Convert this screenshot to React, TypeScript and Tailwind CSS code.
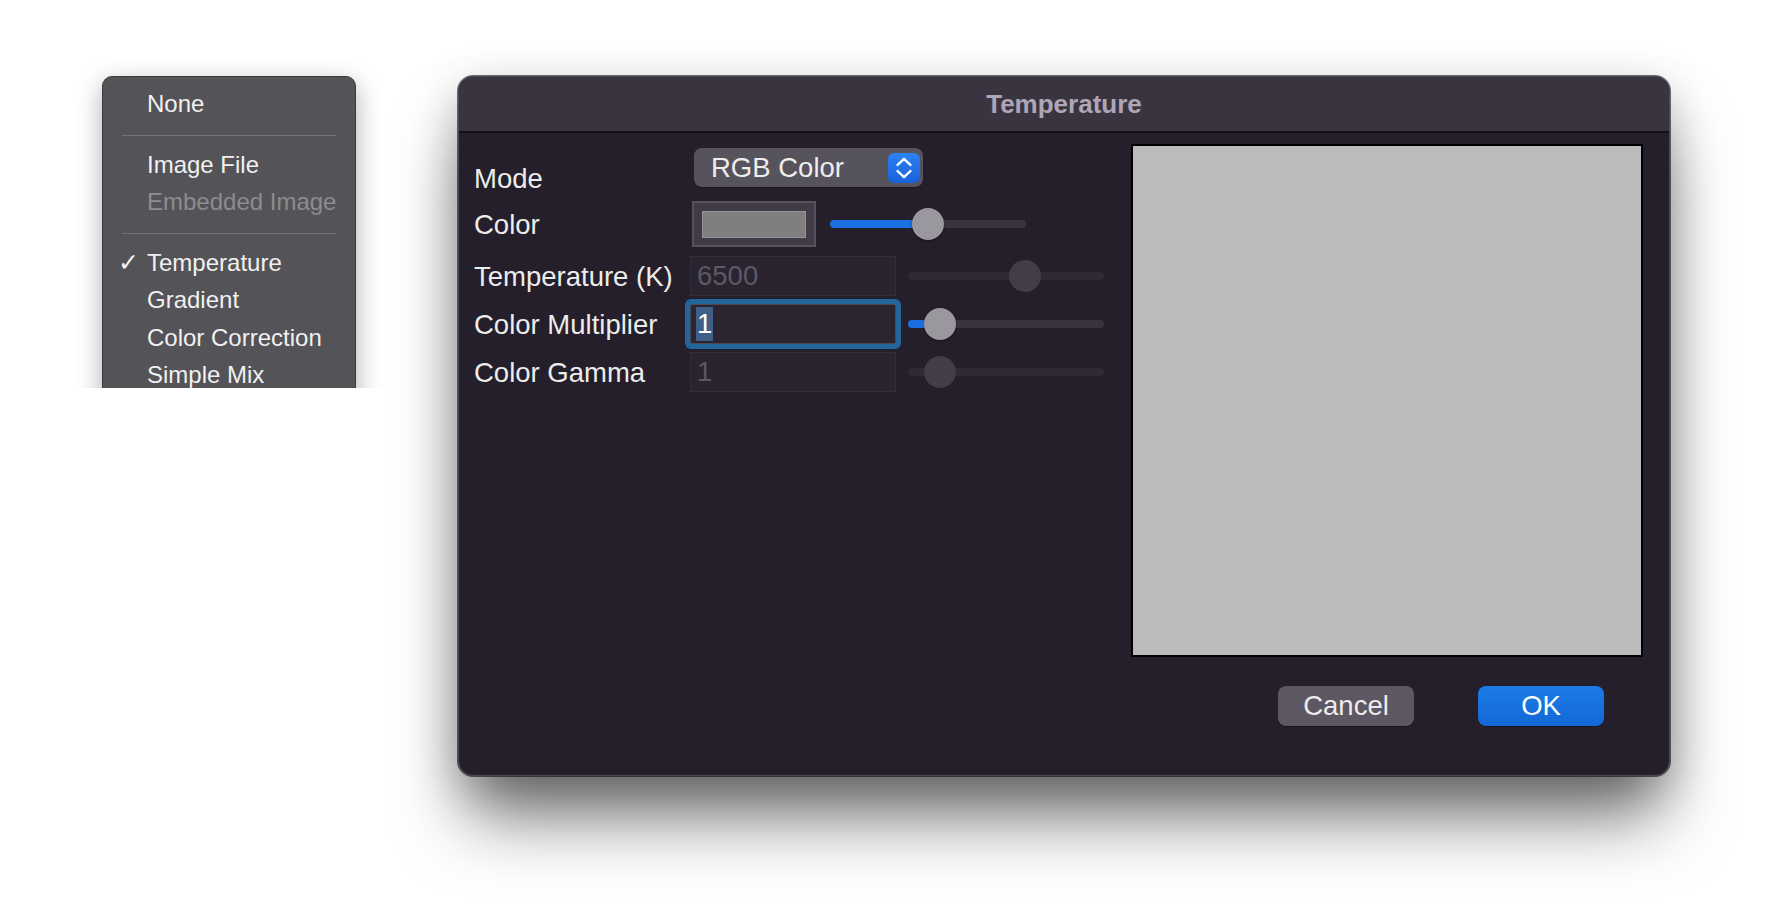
import React from "react";

type SliderProps = { fill: number; knob: number; enabled: boolean };

function Slider({ fill, knob, enabled }: SliderProps) {
  return (
    <div className="relative h-[32px] w-[196px] shrink-0">
      <div
        className={
          enabled
            ? "absolute left-0 right-0 top-[12px] h-[8px] rounded-full bg-[#38333e]"
            : "absolute left-0 right-0 top-[12px] h-[8px] rounded-full bg-[#2f2a35]"
        }
      />
      {fill > 0 && (
        <div
          className="absolute left-0 top-[12px] h-[8px] rounded-full bg-[#1b6fe2]"
          style={{ width: fill }}
        />
      )}
      <div
        className={
          enabled
            ? "absolute top-0 h-[32px] w-[32px] rounded-full bg-[#9b979f] shadow-[0_1px_2px_rgba(0,0,0,0.4)]"
            : "absolute top-0 h-[32px] w-[32px] rounded-full bg-[#423d48]"
        }
        style={{ left: knob - 16 }}
      />
    </div>
  );
}

function MenuItem({ label, checked, disabled }: { label: string; checked?: boolean; disabled?: boolean }) {
  return (
    <div className="flex h-[37.5px] items-center pl-[15px] leading-[37.5px]">
      <span className="w-[29px] text-[25px] text-[#f2f2f2]">{checked ? "✓" : ""}</span>
      <span className={disabled ? "text-[#8d8c8f]" : "text-[#f0f0f0]"}>{label}</span>
    </div>
  );
}

function Separator() {
  return (
    <div className="pt-[12px] pb-[10px]">
      <div className="mx-[19px] h-px bg-[#737275]" />
    </div>
  );
}

function Label({ children }: { children: React.ReactNode }) {
  return <div className="w-[216px] shrink-0 leading-[27px] text-[#ececec]">{children}</div>;
}

export default function App() {
  return (
    <div className="flex h-[924px] w-[1782px] items-start overflow-hidden bg-white font-['Liberation_Sans',Arial,sans-serif]">
      {/* Popup menu (cropped) */}
      <div className="h-[388px] w-[400px] shrink-0 overflow-hidden pl-[102px] pt-[76px]">
        <div className="h-[420px] w-[254px] rounded-[10px] border border-[#3a393c] bg-[#545357] pt-[8px] text-[24px] shadow-[0_8px_26px_rgba(0,0,0,0.32)]">
          <MenuItem label="None" />
          <Separator />
          <MenuItem label="Image File" />
          <MenuItem label="Embedded Image" disabled />
          <Separator />
          <MenuItem label="Temperature" checked />
          <MenuItem label="Gradient" />
          <MenuItem label="Color Correction" />
          <MenuItem label="Simple Mix" />
        </div>
      </div>

      {/* Dialog */}
      <div className="ml-[58px] mt-[76px] flex h-[700px] w-[1212px] shrink-0 flex-col overflow-hidden rounded-[15px] border border-[#4b4851] bg-[#241f2a] text-[27.5px] shadow-[0_0_0_1px_rgba(0,0,0,0.55),0_50px_70px_-10px_rgba(0,0,0,0.55),0_12px_45px_rgba(0,0,0,0.22)]">
        {/* Title bar */}
        <div className="flex h-[56px] shrink-0 items-center justify-center border-b-2 border-[#141218] bg-[#3a3441]">
          <span className="text-[26px] font-bold text-[#aea6b7]">Temperature</span>
        </div>

        {/* Body */}
        <div className="flex pl-[15px] pr-[26px] pt-[11px]">
          <div className="flex flex-1 flex-col">
            {/* Mode */}
            <div className="mt-[4px] flex h-[39px] items-start">
              <div className="mt-[17px]">
                <Label>Mode</Label>
              </div>
              <div className="ml-[4px] flex h-[39px] w-[229px] items-center justify-between rounded-[8px] bg-[#57535c] pl-[17px] pr-[3px] text-[#ededed] shadow-[0_1px_1px_rgba(0,0,0,0.3)]">
                <span>RGB Color</span>
                <div className="flex h-[30px] w-[32px] items-center justify-center rounded-[6px] bg-[linear-gradient(#2d82f2,#1762d9)]">
                  <svg width="18" height="24" viewBox="0 0 18 24" fill="none">
                    <path d="M2.5 9 L9 2.8 L15.5 9" stroke="white" strokeWidth="2.4" strokeLinecap="round" strokeLinejoin="round" />
                    <path d="M2.5 15 L9 21.2 L15.5 15" stroke="white" strokeWidth="2.4" strokeLinecap="round" strokeLinejoin="round" />
                  </svg>
                </div>
              </div>
            </div>

            {/* Color */}
            <div className="mt-[14px] flex h-[46px] items-center">
              <Label>Color</Label>
              <div className="ml-[2px] flex h-[46px] w-[124px] shrink-0 items-center justify-center border-2 border-[#57535d] bg-[#403b46]">
                <div className="h-[27px] w-[104px] border border-[#939393] bg-[#7f7f7f]" />
              </div>
              <div className="ml-[14px]">
                <Slider fill={98} knob={98} enabled />
              </div>
            </div>

            {/* Temperature (K) */}
            <div className="mt-[5px] flex h-[48px] items-center">
              <Label>Temperature (K)</Label>
              <div className="flex h-[40px] w-[206px] shrink-0 items-center border border-[#332e39] bg-[#29242f] px-[6px] text-[#5d5865]">
                6500
              </div>
              <div className="ml-[12px]">
                <Slider fill={0} knob={117} enabled={false} />
              </div>
            </div>

            {/* Color Multiplier */}
            <div className="flex h-[48px] items-center">
              <Label>Color Multiplier</Label>
              <div className="flex h-[40px] w-[206px] shrink-0 items-center rounded-[2px] border border-[#4d4856] bg-[#2a2530] px-[5px] text-white shadow-[0_0_0_5px_#22649c]">
                <span className="inline-block h-[34px] bg-[#3d5f88] px-px leading-[34px]">1</span>
              </div>
              <div className="ml-[12px]">
                <Slider fill={32} knob={32} enabled />
              </div>
            </div>

            {/* Color Gamma */}
            <div className="flex h-[48px] items-center">
              <Label>Color Gamma</Label>
              <div className="flex h-[40px] w-[206px] shrink-0 items-center border border-[#332e39] bg-[#29242f] px-[6px] text-[#5d5865]">
                1
              </div>
              <div className="ml-[12px]">
                <Slider fill={0} knob={32} enabled={false} />
              </div>
            </div>
          </div>

          {/* Preview */}
          <div className="h-[513px] w-[512px] shrink-0 border-2 border-black bg-[#bbbbbb]" />
        </div>

        {/* Buttons */}
        <div className="mt-[29px] flex justify-end gap-[64px] pr-[65px]">
          <div className="flex h-[40px] w-[136px] items-center justify-center rounded-[8px] bg-[#5c5762] text-[#ececec] shadow-[0_1px_1px_rgba(0,0,0,0.3)]">
            Cancel
          </div>
          <div className="flex h-[40px] w-[126px] items-center justify-center rounded-[8px] bg-[linear-gradient(#1b7ce6,#1468d6)] text-white shadow-[0_1px_1px_rgba(0,0,0,0.3)]">
            OK
          </div>
        </div>
      </div>
    </div>
  );
}
